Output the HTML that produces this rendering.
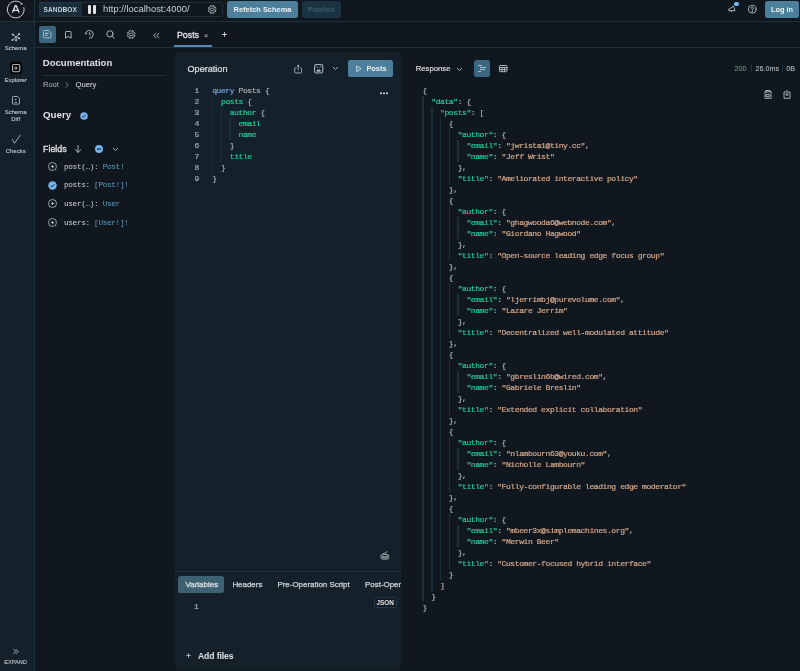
<!DOCTYPE html>
<html><head><meta charset="utf-8">
<style>
*{box-sizing:border-box;margin:0;padding:0}
html,body{width:800px;height:671px;overflow:hidden;background:#10171e;font-family:"Liberation Sans",sans-serif;color:#dfe3e6}
body{position:relative}
.abs{position:absolute;white-space:nowrap}
.sb{font-weight:normal;-webkit-text-stroke:0.25px currentColor}
.hline{position:absolute;height:1px;background:#1d313d}
.vline{position:absolute;width:1px;background:#1d313d}
svg{position:absolute;overflow:visible}
.ico{fill:none;stroke:#b9c2c8;stroke-width:0.9;stroke-linecap:round;stroke-linejoin:round}
.code{position:absolute;font-family:"Liberation Mono",monospace;font-size:8px;letter-spacing:-0.41px;line-height:11px;white-space:pre;color:#a9b1b7;-webkit-text-stroke:0.2px currentColor}
.kw{color:#77a6dc}.fd{color:#1fcb9a}.pu{color:#a9b1b7}.ky{color:#1fcb9a}.st{color:#d6a88c}
.guide{position:absolute;width:1.6px;background:#1b303a}
.side{position:absolute;left:0;width:31.3px;text-align:center;font-size:6px;line-height:7px;color:#c3cacf;-webkit-text-stroke:0.1px currentColor}
.field{position:absolute;left:64px;font-family:"Liberation Mono",monospace;font-size:7.8px;letter-spacing:-0.38px;line-height:10px;color:#cdd3d8;white-space:pre}
.ty{color:#5f9fc2}
.tab{position:absolute;top:576px;height:17px;line-height:17px;font-size:7.95px;-webkit-text-stroke:0.25px currentColor;color:#d0d6da;white-space:nowrap}
</style></head><body><div id="root" style="position:absolute;left:0;top:0;width:800px;height:671px;will-change:transform">
<!-- sidebar -->
<div class="abs" style="left:0;top:22px;width:34px;height:649px;background:#14212a"></div>
<div class="vline" style="left:34px;top:0;height:671px"></div>
<div class="hline" style="left:0;top:21px;width:800px"></div>
<div class="hline" style="left:35px;top:47px;width:765px"></div>

<!-- logo -->
<svg style="left:0;top:0" width="34" height="21" viewBox="0 0 34 21">
  <path d="M23.75 7.17 A8.35 8.35 0 1 1 21.81 3.8" fill="none" stroke="#d5dadd" stroke-width="0.95"/>
  <circle cx="21.75" cy="3.85" r="0.95" fill="#d5dadd"/>
  <path d="M12.4 12.6 L15.2 5.9 Q15.75 5 16.3 5.9 L19.1 12.6 M13.6 10.3 H17.9" fill="none" stroke="#dfe3e6" stroke-width="1.35" stroke-linejoin="round"/>
</svg>

<!-- sidebar items -->
<svg style="left:11px;top:32.5px" width="9" height="9" viewBox="0 0 9 9">
  <path d="M1.8 1.5 L5.1 3.7 L8 1.15 M5.1 3.7 L8 5.3 M5.1 3.7 L1.5 7 M5.1 3.7 L5.1 7.2" fill="none" stroke="#b9c2c8" stroke-width="0.8"/>
  <circle cx="1.8" cy="1.5" r="1.1" fill="#b9c2c8"/><circle cx="8" cy="1.15" r="1.1" fill="#b9c2c8"/><circle cx="8" cy="5.3" r="1.1" fill="#b9c2c8"/>
  <circle cx="1.5" cy="7" r="1.1" fill="#b9c2c8"/><circle cx="5.1" cy="7.2" r="1.1" fill="#b9c2c8"/><circle cx="5.1" cy="3.7" r="0.8" fill="#b9c2c8"/>
</svg>
<div class="side" style="top:45px">Schema</div>
<div class="abs" style="left:9.7px;top:62.3px;width:12.4px;height:11.8px;background:#030507;border-radius:2.5px"></div>
<svg style="left:11.6px;top:64.3px" width="8.3" height="8.3" viewBox="0 0 8.3 8.3">
  <rect x="0.55" y="0.55" width="7.2" height="7.2" rx="1.4" fill="none" stroke="#aeb6bb" stroke-width="1.1"/>
  <circle cx="3.8" cy="4.1" r="1.05" fill="none" stroke="#c0c7cc" stroke-width="0.9"/><path d="M4.6 3.3 L5.6 4.1 L4.6 4.9 Z" fill="#c0c7cc"/>
</svg>
<div class="side" style="top:77px">Explorer</div>
<svg style="left:11.9px;top:96.1px" width="8" height="8.6" viewBox="0 0 8 8.6">
  <path d="M1.3 0.5 H5.6 L7.5 2.4 V7.3 A0.8 0.8 0 0 1 6.7 8.1 H1.3 A0.8 0.8 0 0 1 0.5 7.3 V1.3 A0.8 0.8 0 0 1 1.3 0.5 Z" fill="none" stroke="#aeb6bb" stroke-width="0.9"/>
  <path d="M2.8 2.9 H4.6 L3.7 4.4 Z" fill="#c8cfd3"/><path d="M2.6 6.4 H4.9" stroke="#aeb6bb" stroke-width="0.9"/>
</svg>
<div class="side" style="top:108.9px;line-height:6.8px">Schema<br>Diff</div>
<svg style="left:11.7px;top:135px" width="9" height="9" viewBox="0 0 9 9">
  <path d="M0.5 4.6 L2.5 8.2 L8.3 0.3" fill="none" stroke="#b9c2c8" stroke-width="0.85" stroke-linecap="round" stroke-linejoin="round"/>
</svg>
<div class="side" style="top:147.5px">Checks</div>
<svg style="left:12.5px;top:648.5px" width="6" height="5" viewBox="0 0 6 5" class="ico">
  <path d="M0.8 0.5 L2.8 2.5 L0.8 4.5 M3.2 0.5 L5.2 2.5 L3.2 4.5"/>
</svg>
<div class="side" style="top:659px;font-size:5.6px">EXPAND</div>

<!-- top bar -->
<div class="abs" style="left:39px;top:2px;width:184px;height:15px;border:1px solid #1d313d;border-radius:2px"></div>
<div class="abs" style="left:39px;top:2px;width:43px;height:15px;background:#192e3a;border:1px solid #1f3644;border-right:none;border-radius:2px 0 0 2px;font-size:6.5px;font-weight:bold;letter-spacing:0.15px;color:#c9d0d5;line-height:13.4px;padding-right:1.5px;text-align:center">SANDBOX</div>
<div class="abs" style="left:88px;top:5px;width:3px;height:8.5px;background:#dfe3e6;border-radius:1px"></div>
<div class="abs" style="left:92.5px;top:5px;width:3px;height:8.5px;background:#dfe3e6;border-radius:1px"></div>
<div class="abs" style="left:103px;top:3px;font-size:9.4px;line-height:12px;color:#c9d0d5">http://localhost:4000/</div>
<svg style="left:207.8px;top:5.1px" width="8.4" height="8.9" viewBox="0 0 8.4 8.9">
  <path d="M5.05 0.45 L6.29 0.99 L6.38 2.15 L6.95 2.97 L7.49 2.25 L8.00 3.56 L7.29 4.45 L7.14 5.45 L8.00 5.34 L7.49 6.65 L6.38 6.75 L5.60 7.35 L6.29 7.91 L5.05 8.45 L4.20 7.70 L3.25 7.54 L3.35 8.45 L2.11 7.91 L2.02 6.75 L1.45 5.93 L0.91 6.65 L0.40 5.34 L1.11 4.45 L1.26 3.45 L0.40 3.56 L0.91 2.25 L2.02 2.15 L2.80 1.55 L2.11 0.99 L3.35 0.45 L4.20 1.20 L5.15 1.36 Z" fill="none" stroke="#aab3b9" stroke-width="0.9" stroke-linejoin="round"/>
  <ellipse cx="4.2" cy="4.45" rx="1.85" ry="1.4" fill="none" stroke="#aab3b9" stroke-width="0.9"/>
</svg>
<div class="abs" style="left:227px;top:1px;width:71px;height:16.5px;background:#4c7f9b;border-radius:2.5px;font-size:7.45px;font-weight:bold;color:#eef2f4;line-height:17px;text-align:center">Refetch Schema</div>
<div class="abs" style="left:302px;top:1px;width:38.5px;height:16.5px;background:#1b3240;border-radius:2.5px;font-size:7.45px;font-weight:bold;color:#3d5b6c;line-height:17px;text-align:center">Publish</div>

<svg style="left:726.8px;top:4.6px" width="10" height="8" viewBox="0 0 10 8">
  <g transform="rotate(-18 5 4) translate(5 4) scale(0.9) translate(-5 -4)"><path d="M1.3 3 H3 L7.6 1.3 V6.9 L3 5.2 H1.3 Z M3 5.2 L3.7 7.2" fill="none" stroke="#b9c2c8" stroke-width="0.9" stroke-linejoin="round"/></g>
</svg>
<div class="abs" style="left:734.4px;top:1.9px;width:4.6px;height:4.6px;border-radius:50%;background:#7bbcf5"></div>
<svg style="left:748px;top:5.1px" width="9" height="9" viewBox="0 0 9 9" class="ico">
  <circle cx="4.2" cy="4.2" r="3.9"/><path d="M3.1 3.3 A1.15 1.15 0 1 1 4.2 4.5 V5.1"/><circle cx="4.2" cy="6.5" r="0.25"/>
</svg>
<div class="abs" style="left:765px;top:1px;width:34px;height:16.8px;background:#4c7f9b;border-radius:2.5px;font-size:7.4px;font-weight:bold;color:#eef2f4;line-height:17.4px;text-align:center">Log in</div>

<!-- tab bar icons -->
<div class="abs" style="left:38.8px;top:26px;width:16.8px;height:16.5px;background:#3a6680;border-radius:2.5px"></div>
<svg style="left:43px;top:30.4px" width="8.4" height="8.4" viewBox="0 0 8.4 8.4">
  <path d="M1.4 0.5 H5.8 L7.9 2.6 V6.9 A1 1 0 0 1 6.9 7.9 H1.5 A1 1 0 0 1 0.5 6.9 V1.5 A1 1 0 0 1 1.4 0.5 Z" fill="none" stroke="#b4c4ce" stroke-width="0.9"/>
  <path d="M2.2 3.3 H5.6 M2.2 5.3 H4.4" stroke="#b4c4ce" stroke-width="1.2"/>
</svg>
<svg style="left:64.6px;top:30.9px" width="6.6" height="7.6" viewBox="0 0 6.6 7.6">
  <path d="M1.3 0.5 H5.3 A0.8 0.8 0 0 1 6.1 1.3 V7.1 L3.3 5.4 L0.5 7.1 V1.3 A0.8 0.8 0 0 1 1.3 0.5 Z" fill="none" stroke="#b9c2c8" stroke-width="0.9" stroke-linejoin="round"/>
</svg>
<svg style="left:84px;top:30px" width="10" height="9" viewBox="0 0 10 9">
  <path d="M1.6 3.4 A3.9 3.9 0 1 1 5.3 8.3" fill="none" stroke="#b9c2c8" stroke-width="0.9" stroke-linecap="round"/>
  <path d="M0.4 3.6 L2.6 2.4 L2.6 4.6 Z" fill="#b9c2c8"/>
  <path d="M5.4 2.6 V4.4 L6.6 5.1" fill="none" stroke="#b9c2c8" stroke-width="0.9" stroke-linecap="round"/>
</svg>
<svg style="left:105.6px;top:29.8px" width="9" height="9" viewBox="0 0 9 9" class="ico">
  <circle cx="3.9" cy="3.8" r="3.1"/><path d="M6.2 6.1 L8.2 8.4"/>
</svg>
<svg style="left:126.9px;top:29.9px" width="8.4" height="8.9" viewBox="0 0 8.4 8.9">
  <path d="M5.05 0.45 L6.29 0.99 L6.38 2.15 L6.95 2.97 L7.49 2.25 L8.00 3.56 L7.29 4.45 L7.14 5.45 L8.00 5.34 L7.49 6.65 L6.38 6.75 L5.60 7.35 L6.29 7.91 L5.05 8.45 L4.20 7.70 L3.25 7.54 L3.35 8.45 L2.11 7.91 L2.02 6.75 L1.45 5.93 L0.91 6.65 L0.40 5.34 L1.11 4.45 L1.26 3.45 L0.40 3.56 L0.91 2.25 L2.02 2.15 L2.80 1.55 L2.11 0.99 L3.35 0.45 L4.20 1.20 L5.15 1.36 Z" fill="none" stroke="#aab3b9" stroke-width="0.9" stroke-linejoin="round"/>
  <ellipse cx="4.2" cy="4.45" rx="1.85" ry="1.4" fill="none" stroke="#aab3b9" stroke-width="0.9"/>
</svg>
<svg style="left:153px;top:32.7px" width="7" height="5" viewBox="0 0 7 5" class="ico">
  <path d="M3 0.3 L0.7 2.5 L3 4.7 M6 0.3 L3.7 2.5 L6 4.7"/>
</svg>
<div class="abs" style="left:177px;top:29.4px;font-size:8.8px;-webkit-text-stroke:0.3px #dfe3e6;line-height:12px;color:#dfe3e6">Posts</div>
<div class="abs" style="left:203.7px;top:30.6px;font-size:8px;line-height:10px;color:#b9c2c8">×</div>
<svg style="left:221.9px;top:32px" width="5" height="5" viewBox="0 0 5 5"><path d="M2.5 0.2 V4.8 M0.2 2.5 H4.8" stroke="#dfe3e6" stroke-width="0.9"/></svg>
<div class="abs" style="left:174.2px;top:45px;width:37.8px;height:2px;background:#4f8db2"></div>

<!-- documentation panel -->
<div class="abs" style="left:42.8px;top:56.3px;font-size:9.55px;font-weight:bold;line-height:13px;color:#dfe3e6">Documentation</div>
<div class="abs" style="left:43px;top:74.6px;width:123px;height:1px;background:#1d323d"></div>
<div class="abs" style="left:43px;top:80px;font-size:7.5px;line-height:10px;color:#aeb7bd">Root</div>
<svg style="left:64.5px;top:82px" width="4" height="6" viewBox="0 0 4 6" class="ico"><path d="M0.8 0.5 L3 3 L0.8 5.5" style="stroke:#7f8a91"/></svg>
<div class="abs" style="left:75.5px;top:80px;font-size:7.7px;line-height:10px;color:#dfe3e6">Query</div>
<div class="abs" style="left:43px;top:108.3px;font-size:9.75px;font-weight:bold;line-height:13px;color:#dfe3e6">Query</div>
<svg style="left:80px;top:111.5px" width="8" height="8" viewBox="0 0 8 8"><circle cx="4" cy="4" r="3.8" fill="#74b4f0"/><path d="M2.3 4.1 L3.5 5.3 L5.8 2.8" fill="none" stroke="#10171e" stroke-width="0.9"/></svg>
<div class="abs" style="left:43px;top:142.5px;font-size:8.9px;-webkit-text-stroke:0.3px #dfe3e6;line-height:12px;color:#dfe3e6">Fields</div>
<svg style="left:74px;top:145px" width="8" height="8" viewBox="0 0 8 8" class="ico"><path d="M4 0.5 V7.3 M1 4.5 L4 7.3 L7 4.5"/></svg>
<svg style="left:94.5px;top:144.6px" width="8" height="8" viewBox="0 0 8 8"><circle cx="4" cy="4" r="4" fill="#74b4f0"/><path d="M2 4 H6" stroke="#10171e" stroke-width="1.1"/></svg>
<svg style="left:113px;top:147.5px" width="5" height="3" viewBox="0 0 5 3" class="ico"><path d="M0.3 0.3 L2.5 2.5 L4.7 0.3"/></svg>

<svg style="left:48px;top:162px" width="9" height="9" viewBox="0 0 9 9"><circle cx="4.5" cy="4.5" r="4" fill="none" stroke="#b9c2c8" stroke-width="0.8"/><path d="M4.5 2.8 V6.2 M2.8 4.5 H6.2" stroke="#c5ccd1" stroke-width="0.8"/></svg>
<div class="field" style="top:161.5px">post(…): <span class="ty">Post!</span></div>
<svg style="left:48px;top:180.9px" width="9" height="9" viewBox="0 0 9 9"><circle cx="4.5" cy="4.5" r="4.2" fill="#74b4f0"/><path d="M2.6 4.6 L3.9 5.9 L6.4 3.2" fill="none" stroke="#10171e" stroke-width="0.9"/></svg>
<div class="field" style="top:180.3px">posts: <span class="ty">[Post!]!</span></div>
<svg style="left:48px;top:199.3px" width="9" height="9" viewBox="0 0 9 9"><circle cx="4.5" cy="4.5" r="4" fill="none" stroke="#b9c2c8" stroke-width="0.8"/><path d="M4.5 2.8 V6.2 M2.8 4.5 H6.2" stroke="#c5ccd1" stroke-width="0.8"/></svg>
<div class="field" style="top:198.8px">user(…): <span class="ty">User</span></div>
<svg style="left:48px;top:218px" width="9" height="9" viewBox="0 0 9 9"><circle cx="4.5" cy="4.5" r="4" fill="none" stroke="#b9c2c8" stroke-width="0.8"/><path d="M4.5 2.8 V6.2 M2.8 4.5 H6.2" stroke="#c5ccd1" stroke-width="0.8"/></svg>
<div class="field" style="top:217.5px">users: <span class="ty">[User!]!</span></div>

<!-- operation card -->
<div class="abs" style="left:174.5px;top:51.5px;width:226.7px;height:618.5px;background:#15212a;border-radius:4px"></div>
<div class="abs" style="left:187.5px;top:62.5px;font-size:9.1px;-webkit-text-stroke:0.2px #dfe3e6;line-height:12px;color:#dfe3e6">Operation</div>
<svg style="left:293.5px;top:64px" width="8.5" height="9.5" viewBox="0 0 8.5 9.5">
  <path d="M2.4 3.6 H1.9 A1.2 1.2 0 0 0 0.7 4.8 V7.8 A1.2 1.2 0 0 0 1.9 9 H6.4 A1.2 1.2 0 0 0 7.6 7.8 V4.8 A1.2 1.2 0 0 0 6.4 3.6 H6" fill="none" stroke="#aab3b9" stroke-width="0.9"/>
  <path d="M4.2 6.3 V1.2" stroke="#aab3b9" stroke-width="0.9"/><path d="M2.9 2.2 L4.2 0.6 L5.5 2.2 Z" fill="#c5ccd1"/>
</svg>
<svg style="left:313.5px;top:63.8px" width="9.3" height="9.5" viewBox="0 0 9.3 9.5">
  <rect x="0.55" y="0.55" width="8.2" height="8.4" rx="1.6" fill="none" stroke="#aab3b9" stroke-width="1.1"/>
  <path d="M2.3 1.8 L3.6 3.6 M7 1.8 L5.7 3.6" stroke="#aab3b9" stroke-width="0.9"/>
  <path d="M2.5 7.7 Q2.6 5.3 4.65 5.3 Q6.7 5.3 6.8 7.7 Z" fill="#aab3b9"/>
</svg>
<svg style="left:332.8px;top:67px" width="5" height="3" viewBox="0 0 5 3" class="ico"><path d="M0.3 0.3 L2.5 2.5 L4.7 0.3"/></svg>
<div class="abs" style="left:348px;top:60px;width:44.5px;height:16.8px;background:#4c7f9b;border-radius:2.5px"></div>
<svg style="left:355.8px;top:64.8px" width="6" height="7.5" viewBox="0 0 6 7.5"><path d="M0.7 0.9 L5.1 3.75 L0.7 6.6 Z" fill="none" stroke="#dfe6ea" stroke-width="0.85" stroke-linejoin="round"/></svg>
<div class="abs" style="left:366.4px;top:62.6px;font-size:7.4px;font-weight:bold;line-height:12px;color:#eef2f4">Posts</div>
<svg style="left:380px;top:92.3px" width="8" height="2.4" viewBox="0 0 8 2.4"><circle cx="1" cy="1.2" r="0.95" fill="#e3e7ea"/><circle cx="4" cy="1.2" r="0.95" fill="#e3e7ea"/><circle cx="7" cy="1.2" r="0.95" fill="#e3e7ea"/></svg>

<div class="code" style="left:190px;top:85px;width:9px;text-align:right;color:#a3abb1">1
2
3
4
5
6
7
8
9</div>
<div class="guide" style="left:211.90px;top:96px;height:77px"></div>
<div class="guide" style="left:220.68px;top:107px;height:55px"></div>
<div class="guide" style="left:229.46px;top:118px;height:22px"></div>
<div class="code" style="left:212.2px;top:85px"><div><span class="kw">query</span> Posts <span class="pu">{</span></div><div>  <span class="fd">posts</span><span class="pu"> {</span></div><div>    <span class="fd">author</span><span class="pu"> {</span></div><div>      <span class="fd">email</span></div><div>      <span class="fd">name</span></div><div>    <span class="pu">}</span></div><div>    <span class="fd">title</span></div><div>  <span class="pu">}</span></div><div><span class="pu">}</span></div></div>

<svg style="left:379.5px;top:550px" width="9.5" height="10" viewBox="0 0 9.5 10">
  <rect x="0.9" y="4.5" width="7.8" height="4.6" rx="1.6" fill="none" stroke="#a3acb2" stroke-width="0.95"/>
  <path d="M1.8 5.6 L4.8 6.5 L7.8 5.6 V8.3 H1.8 Z" fill="#a3acb2" opacity="0.8"/>
  <path d="M2.8 4.5 Q3 3 4.6 3.1 Q6.4 3.2 7.1 1.4" fill="none" stroke="#a3acb2" stroke-width="0.9" stroke-linecap="round"/>
</svg>
<div class="abs" style="left:175px;top:570.5px;width:226px;height:1px;background:#1f3441"></div>
<div class="abs" style="left:178.4px;top:576px;width:45.6px;height:17px;background:#3d6073;border-radius:2.5px"></div>
<div class="tab" style="left:185.6px;color:#dfe3e6">Variables</div>
<div class="tab" style="left:232.4px">Headers</div>
<div class="tab" style="left:277.4px">Pre-Operation Script</div>
<div class="abs" style="left:365px;top:576px;width:36px;height:17px;overflow:hidden"><div class="tab" style="left:0;top:0">Post-Operation Script</div></div>
<div class="abs" style="left:374px;top:597px;width:22.5px;height:10.5px;border:1px solid #20384a;border-radius:1.5px;background:#121c24;font-size:6.4px;font-weight:bold;color:#dfe3e6;line-height:10.1px;text-align:center">JSON</div>
<div class="code" style="left:194px;top:601px;color:#a9b1b7">1</div>
<svg style="left:186.4px;top:653.2px" width="5" height="5" viewBox="0 0 5 5"><path d="M2.5 0.3 V4.7 M0.3 2.5 H4.7" stroke="#aab3b9" stroke-width="1"/></svg>
<div class="abs" style="left:198px;top:650.3px;font-size:8.6px;font-weight:bold;letter-spacing:-0.1px;line-height:12px;color:#dfe3e6">Add files</div>

<!-- response -->
<div class="abs" style="left:415.8px;top:63px;font-size:7.7px;-webkit-text-stroke:0.15px #dfe3e6;line-height:11px;color:#dfe3e6">Response</div>
<svg style="left:456.9px;top:67.5px" width="5" height="3" viewBox="0 0 5 3" class="ico"><path d="M0.3 0.3 L2.5 2.5 L4.7 0.3"/></svg>
<div class="abs" style="left:474px;top:60px;width:16.2px;height:16.8px;background:#3a6680;border-radius:2.5px"></div>
<div class="abs" style="left:478px;top:65px;width:4px;height:0.8px;background:#aac0cc"></div>
<div class="abs" style="left:480.2px;top:67.2px;width:5.7px;height:0.8px;background:#aac0cc"></div>
<div class="abs" style="left:480.2px;top:69.1px;width:4.8px;height:0.8px;background:#aac0cc"></div>
<div class="abs" style="left:478px;top:71.1px;width:2.8px;height:0.8px;background:#aac0cc"></div>
<svg style="left:498.7px;top:65px" width="8.5" height="7.2" viewBox="0 0 8.5 7.2" class="ico">
  <rect x="0.5" y="0.5" width="7.5" height="6.2" rx="0.8"/><path d="M0.5 2.5 H8 M0.5 4.6 H8 M3 2.5 V6.7 M5.5 2.5 V6.7"/>
</svg>
<div class="abs" style="left:734.5px;top:64px;font-size:7.2px;line-height:9px;color:#66b383">200</div>
<div class="abs" style="left:751px;top:64px;width:1px;height:9px;background:#1d3440"></div>
<div class="abs" style="left:755.5px;top:64px;font-size:7.2px;line-height:9px;color:#c9d0d5">26.0ms</div>
<div class="abs" style="left:782.3px;top:64px;width:1px;height:9px;background:#1d3440"></div>
<div class="abs" style="left:786.3px;top:64px;font-size:7.2px;line-height:9px;color:#c9d0d5">0B</div>
<svg style="left:763.7px;top:89.7px" width="8" height="9" viewBox="0 0 8 9" class="ico">
  <path d="M2.3 1.3 H1 V8.3 H7 V1.3 H5.7 M2.3 0.5 H5.7 V2 H2.3 Z M2.8 4.5 H5.2 V6.5 H2.8 Z"/>
</svg>
<svg style="left:782.7px;top:89.7px" width="8" height="9" viewBox="0 0 8 9" class="ico">
  <path d="M2.5 2 H1 V8.3 H7 V2 H5.5 M4 0.5 V5.5 M2.5 4 L4 5.5 L5.5 4"/>
</svg>
<div class="guide" style="left:422.20px;top:96px;height:506px"></div>
<div class="guide" style="left:430.98px;top:107px;height:484px"></div>
<div class="guide" style="left:439.76px;top:118px;height:462px"></div>
<div class="guide" style="left:448.54px;top:129px;height:55px"></div>
<div class="guide" style="left:457.32px;top:140px;height:22px"></div>
<div class="guide" style="left:448.54px;top:206px;height:55px"></div>
<div class="guide" style="left:457.32px;top:217px;height:22px"></div>
<div class="guide" style="left:448.54px;top:283px;height:55px"></div>
<div class="guide" style="left:457.32px;top:294px;height:22px"></div>
<div class="guide" style="left:448.54px;top:360px;height:55px"></div>
<div class="guide" style="left:457.32px;top:371px;height:22px"></div>
<div class="guide" style="left:448.54px;top:437px;height:55px"></div>
<div class="guide" style="left:457.32px;top:448px;height:22px"></div>
<div class="guide" style="left:448.54px;top:514px;height:55px"></div>
<div class="guide" style="left:457.32px;top:525px;height:22px"></div>
<div class="code" style="left:422.5px;top:85px"><div><span class="pu">{</span></div><div>  <span class="ky">&quot;data&quot;</span><span class="pu">: {</span></div><div>    <span class="ky">&quot;posts&quot;</span><span class="pu">: [</span></div><div>      <span class="pu">{</span></div><div>        <span class="ky">&quot;author&quot;</span><span class="pu">: {</span></div><div>          <span class="ky">&quot;email&quot;</span><span class="pu">: </span><span class="st">&quot;jwrista1@tiny.cc&quot;</span><span class="pu">,</span></div><div>          <span class="ky">&quot;name&quot;</span><span class="pu">: </span><span class="st">&quot;Jeff Wrist&quot;</span></div><div>        <span class="pu">},</span></div><div>        <span class="ky">&quot;title&quot;</span><span class="pu">: </span><span class="st">&quot;Ameliorated interactive policy&quot;</span></div><div>      <span class="pu">},</span></div><div>      <span class="pu">{</span></div><div>        <span class="ky">&quot;author&quot;</span><span class="pu">: {</span></div><div>          <span class="ky">&quot;email&quot;</span><span class="pu">: </span><span class="st">&quot;ghagwooda6@webnode.com&quot;</span><span class="pu">,</span></div><div>          <span class="ky">&quot;name&quot;</span><span class="pu">: </span><span class="st">&quot;Giordano Hagwood&quot;</span></div><div>        <span class="pu">},</span></div><div>        <span class="ky">&quot;title&quot;</span><span class="pu">: </span><span class="st">&quot;Open-source leading edge focus group&quot;</span></div><div>      <span class="pu">},</span></div><div>      <span class="pu">{</span></div><div>        <span class="ky">&quot;author&quot;</span><span class="pu">: {</span></div><div>          <span class="ky">&quot;email&quot;</span><span class="pu">: </span><span class="st">&quot;ljerrimbj@purevolume.com&quot;</span><span class="pu">,</span></div><div>          <span class="ky">&quot;name&quot;</span><span class="pu">: </span><span class="st">&quot;Lazare Jerrim&quot;</span></div><div>        <span class="pu">},</span></div><div>        <span class="ky">&quot;title&quot;</span><span class="pu">: </span><span class="st">&quot;Decentralized well-modulated attitude&quot;</span></div><div>      <span class="pu">},</span></div><div>      <span class="pu">{</span></div><div>        <span class="ky">&quot;author&quot;</span><span class="pu">: {</span></div><div>          <span class="ky">&quot;email&quot;</span><span class="pu">: </span><span class="st">&quot;gbreslin6b@wired.com&quot;</span><span class="pu">,</span></div><div>          <span class="ky">&quot;name&quot;</span><span class="pu">: </span><span class="st">&quot;Gabriele Breslin&quot;</span></div><div>        <span class="pu">},</span></div><div>        <span class="ky">&quot;title&quot;</span><span class="pu">: </span><span class="st">&quot;Extended explicit collaboration&quot;</span></div><div>      <span class="pu">},</span></div><div>      <span class="pu">{</span></div><div>        <span class="ky">&quot;author&quot;</span><span class="pu">: {</span></div><div>          <span class="ky">&quot;email&quot;</span><span class="pu">: </span><span class="st">&quot;nlambourn63@youku.com&quot;</span><span class="pu">,</span></div><div>          <span class="ky">&quot;name&quot;</span><span class="pu">: </span><span class="st">&quot;Nicholle Lambourn&quot;</span></div><div>        <span class="pu">},</span></div><div>        <span class="ky">&quot;title&quot;</span><span class="pu">: </span><span class="st">&quot;Fully-configurable leading edge moderator&quot;</span></div><div>      <span class="pu">},</span></div><div>      <span class="pu">{</span></div><div>        <span class="ky">&quot;author&quot;</span><span class="pu">: {</span></div><div>          <span class="ky">&quot;email&quot;</span><span class="pu">: </span><span class="st">&quot;mbeer3x@simplemachines.org&quot;</span><span class="pu">,</span></div><div>          <span class="ky">&quot;name&quot;</span><span class="pu">: </span><span class="st">&quot;Merwin Beer&quot;</span></div><div>        <span class="pu">},</span></div><div>        <span class="ky">&quot;title&quot;</span><span class="pu">: </span><span class="st">&quot;Customer-focused hybrid interface&quot;</span></div><div>      <span class="pu">}</span></div><div>    <span class="pu">]</span></div><div>  <span class="pu">}</span></div><div><span class="pu">}</span></div></div>

</div></body></html>
